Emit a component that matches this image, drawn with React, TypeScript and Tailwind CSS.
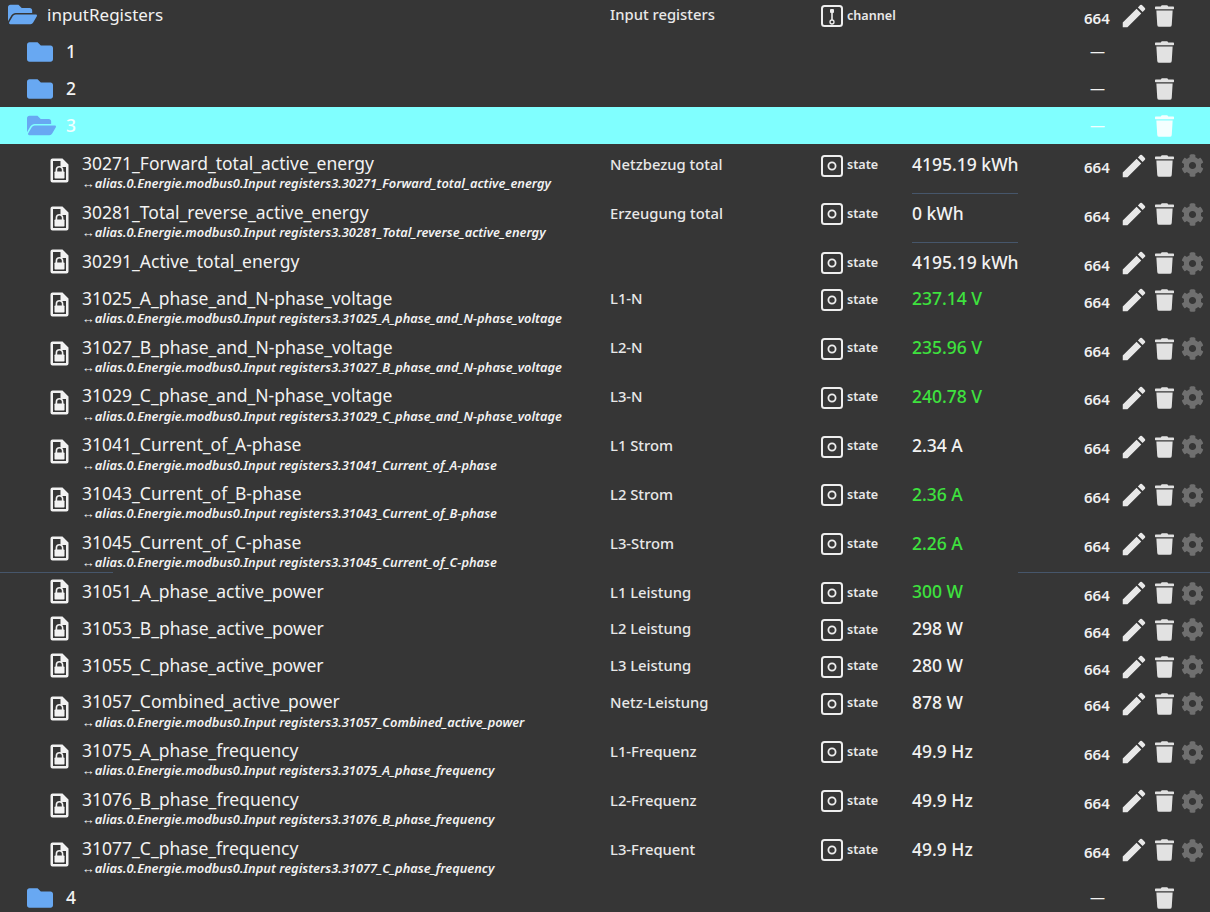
import { FaFolder, FaFolderOpen, FaTrash, FaCog } from 'react-icons/fa';
import { MdEdit } from 'react-icons/md';

type Row = { id: string; alias?: boolean; label?: string; value: string; green?: boolean; line?: boolean };

const rows: Row[] = [
  { id: '30271_Forward_total_active_energy', alias: true, label: 'Netzbezug total', value: '4195.19 kWh', line: true },
  { id: '30281_Total_reverse_active_energy', alias: true, label: 'Erzeugung total', value: '0 kWh', line: true },
  { id: '30291_Active_total_energy', value: '4195.19 kWh' },
  { id: '31025_A_phase_and_N-phase_voltage', alias: true, label: 'L1-N', value: '237.14 V', green: true },
  { id: '31027_B_phase_and_N-phase_voltage', alias: true, label: 'L2-N', value: '235.96 V', green: true },
  { id: '31029_C_phase_and_N-phase_voltage', alias: true, label: 'L3-N', value: '240.78 V', green: true },
  { id: '31041_Current_of_A-phase', alias: true, label: 'L1 Strom', value: '2.34 A' },
  { id: '31043_Current_of_B-phase', alias: true, label: 'L2 Strom', value: '2.36 A', green: true },
  { id: '31045_Current_of_C-phase', alias: true, label: 'L3-Strom', value: '2.26 A', green: true },
];

const rows2: Row[] = [
  { id: '31051_A_phase_active_power', label: 'L1 Leistung', value: '300 W', green: true },
  { id: '31053_B_phase_active_power', label: 'L2 Leistung', value: '298 W' },
  { id: '31055_C_phase_active_power', label: 'L3 Leistung', value: '280 W' },
  { id: '31057_Combined_active_power', alias: true, label: 'Netz-Leistung', value: '878 W' },
  { id: '31075_A_phase_frequency', alias: true, label: 'L1-Frequenz', value: '49.9 Hz' },
  { id: '31076_B_phase_frequency', alias: true, label: 'L2-Frequenz', value: '49.9 Hz' },
  { id: '31077_C_phase_frequency', alias: true, label: 'L3-Frequent', value: '49.9 Hz' },
];

function FileLock() {
  return (
    <svg width="19" height="25" viewBox="0 0 19 25" className="shrink-0">
      <path d="M2.5 0.5H12.5L18.5 6.5V22.5a2 2 0 0 1-2 2H2.5a2 2 0 0 1-2-2V2.5a2 2 0 0 1 2-2Z" fill="#f2f2f2" />
      <path d="M3 3H10.5V9H16V22H3Z" fill="#363636" />
      <path d="M6.4 14V11.8a3.1 3.1 0 0 1 6.2 0V14" fill="none" stroke="#f2f2f2" strokeWidth="1.6" />
      <rect x="4.5" y="13.5" width="10" height="7" rx="0.8" fill="#f2f2f2" />
    </svg>
  );
}

function StateIcon() {
  return (
    <svg width="22" height="22" viewBox="0 0 22 22" className="shrink-0">
      <rect x="1" y="1" width="20" height="20" rx="2.5" fill="none" stroke="#eeeeee" strokeWidth="2" />
      <circle cx="11" cy="11" r="3.6" fill="none" stroke="#eeeeee" strokeWidth="1.8" />
    </svg>
  );
}

function ChannelIcon() {
  return (
    <svg width="22" height="22" viewBox="0 0 22 22" className="shrink-0">
      <rect x="1" y="1" width="20" height="20" rx="2.5" fill="none" stroke="#eeeeee" strokeWidth="2" />
      <path d="M11 4V15" stroke="#eeeeee" strokeWidth="1.6" />
      <rect x="9" y="4" width="4" height="4" rx="1" fill="#eeeeee" />
      <circle cx="11" cy="17" r="2" fill="none" stroke="#eeeeee" strokeWidth="1.3" />
    </svg>
  );
}

function Actions({ edit = true, gear = true, faded = false }: { edit?: boolean; gear?: boolean; faded?: boolean }) {
  return (
    <div className={`flex h-[36.85px] items-center ${edit ? 'pt-[3px]' : ''}`}>
      <div className="flex w-[46px] justify-center pl-[1px]">
        {edit && <MdEdit className="h-[30px] w-[30px] shrink-0 text-[#e8e8e8]" />}
      </div>
      <div className="flex w-[16px] justify-center">
        <FaTrash className={`h-[22px] w-[19px] shrink-0 ${faded ? 'text-[#f4ffff]' : 'text-[#e2e2e2]'}`} />
      </div>
      <div className="flex w-[38px] justify-center pl-[2px]">
        {gear && <FaCog className="h-[23px] w-[23px] shrink-0 text-[#6f6f6f]" />}
      </div>
    </div>
  );
}

function StateRow({ row }: { row: Row }) {
  return (
    <div className={`flex items-start ${row.alias ? 'h-[48.85px]' : 'h-[36.85px]'}`}>
      <div className="flex h-full w-[82px] items-center pl-[50px]">
        <FileLock />
      </div>
      <div className="w-[528px] whitespace-nowrap">
        <div className="flex h-[36.85px] items-center text-[17.5px] leading-none text-[#f2f2f2]">{row.id}</div>
        {row.alias && (
          <div className="-mt-[6px] text-[12.85px] leading-[14px] font-semibold italic text-[#f2f2f2]">
            ↔alias.0.Energie.modbus0.Input registers3.{row.id}
          </div>
        )}
      </div>
      <div className="flex h-[36.85px] w-[211px] items-center text-[14.8px] font-medium text-[#e8e8e8]">{row.label}</div>
      <div className="flex h-[36.85px] w-[91px] items-center gap-[4px] pt-[3px] text-[12.6px] font-semibold text-[#e8e8e8]">
        <StateIcon />
        <span>state</span>
      </div>
      <div className="h-full w-[106px]">
        <div className={`flex h-[36.85px] items-center whitespace-nowrap text-[17.5px] font-medium ${row.green ? 'text-[#3ee23e]' : 'text-[#f2f2f2]'}`}>
          {row.value}
        </div>
        {row.line && <div className="mt-[11px] h-px bg-[#46566b]" />}
      </div>
      <div className="flex h-[36.85px] w-[92px] items-center pt-[7px] pl-[66px] text-[15px] font-semibold text-[#f0f0f0]">664</div>
      <Actions />
    </div>
  );
}

function FolderRow({ name, open, selected }: { name: string; open?: boolean; selected?: boolean }) {
  const Icon = open ? FaFolderOpen : FaFolder;
  return (
    <div className={`flex h-[37px] items-center ${selected ? 'bg-[#80ffff] text-[#f4ffff]' : 'text-[#f2f2f2]'}`}>
      <div className="flex w-[66px] items-center pl-[27px]">
        <Icon className={`shrink-0 text-[#68a8f2] ${open ? 'h-[29px] w-[29px]' : 'h-[26px] w-[26px]'}`} />
      </div>
      <div className="w-[1024px] text-[17.5px] font-medium">{name}</div>
      <div className="w-[20px] text-[15px] leading-none">—</div>
      <Actions edit={false} gear={false} faded={selected} />
    </div>
  );
}

export default function App() {
  return (
    <div
      className="h-[912px] w-[1210px] overflow-hidden bg-[#363636]"
      style={{ fontFamily: '"Noto Sans", "Open Sans", sans-serif' }}
    >
      <div className="-mt-[4px]">
        <div className="flex h-[37px] items-center text-[#f2f2f2]">
          <div className="flex w-[47px] items-center pl-[8px]">
            <FaFolderOpen className="h-[29px] w-[29px] text-[#68a8f2]" />
          </div>
          <div className="w-[563px] text-[17px]">inputRegisters</div>
          <div className="w-[211px] text-[14.8px] font-medium text-[#e8e8e8]">Input registers</div>
          <div className="flex w-[197px] items-center gap-[4px] pt-[3px] text-[12.6px] font-semibold text-[#e8e8e8]">
            <ChannelIcon />
            <span>channel</span>
          </div>
          <div className="flex h-[37px] w-[92px] items-center pt-[7px] pl-[66px] text-[15px] font-semibold">664</div>
          <Actions gear={false} />
        </div>
        <FolderRow name="1" />
        <FolderRow name="2" />
        <FolderRow name="3" open selected />
        <div className="h-[1.6px]" />
        {rows.map((r) => (
          <StateRow key={r.id} row={r} />
        ))}
        <div className="flex h-0 justify-between">
          <div className="-mt-[1px] h-px w-[113px] bg-[#46566b]" />
          <div className="-mt-[1px] h-px w-[192px] bg-[#46566b]" />
        </div>
        {rows2.map((r) => (
          <StateRow key={r.id} row={r} />
        ))}
        <FolderRow name="4" />
      </div>
    </div>
  );
}
